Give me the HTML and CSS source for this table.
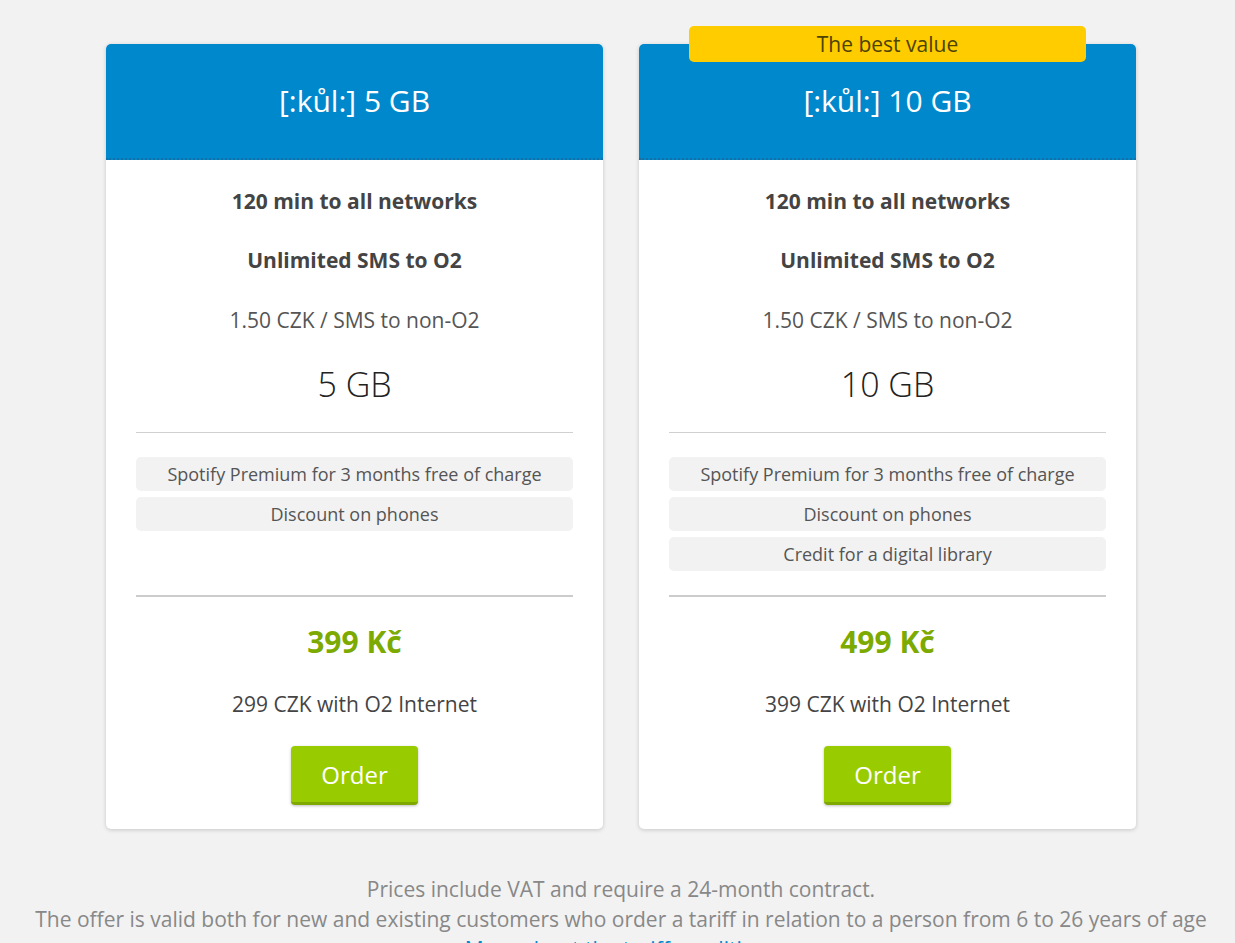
FILE: index.html
```html
<!DOCTYPE html>
<html lang="en">
<head>
<meta charset="utf-8">
<title>[:kůl:] tariffs</title>
<link rel="stylesheet" href="styles.css">
</head>
<body>
<main class="page">
  <section class="plans">
    <article class="card">
      <header class="card-head">[:kůl:] 5 GB</header>
      <div class="card-body">
        <p class="row strong first">120 min to all networks</p>
        <p class="row strong">Unlimited SMS to O2</p>
        <p class="row">1.50 CZK / SMS to non-O2</p>
        <p class="data">5 GB</p>
        <hr class="rule">
        <ul class="perks">
          <li>Spotify Premium for 3 months free of charge</li>
          <li>Discount on phones</li>
        </ul>
        <hr class="rule thick">
        <p class="price">399 Kč</p>
        <p class="row note">299 CZK with O2 Internet</p>
        <div class="cta"><button class="order">Order</button></div>
      </div>
    </article>
    <article class="card">
      <div class="badge">The best value</div>
      <header class="card-head">[:kůl:] 10 GB</header>
      <div class="card-body">
        <p class="row strong first">120 min to all networks</p>
        <p class="row strong">Unlimited SMS to O2</p>
        <p class="row">1.50 CZK / SMS to non-O2</p>
        <p class="data">10 GB</p>
        <hr class="rule">
        <ul class="perks">
          <li>Spotify Premium for 3 months free of charge</li>
          <li>Discount on phones</li>
          <li>Credit for a digital library</li>
        </ul>
        <hr class="rule thick">
        <p class="price">499 Kč</p>
        <p class="row note">399 CZK with O2 Internet</p>
        <div class="cta"><button class="order">Order</button></div>
      </div>
    </article>
  </section>
  <footer class="foot">
    <p>Prices include VAT and require a 24-month contract.</p>
    <p>The offer is valid both for new and existing customers who order a tariff in relation to a person from 6 to 26 years of age</p>
    <p><a class="more" href="#">More about the tariff conditions</a></p>
  </footer>
</main>
</body>
</html>
```
FILE: styles.css
```css
html, body {
  margin: 0;
  padding: 0;
  background: #f2f2f2;
  overflow: hidden;
}
body {
  font-family: "Open Sans", "Liberation Sans", sans-serif;
  color: #444;
}
.page {
  padding-top: 44px;
}
.plans {
  display: flex;
  gap: 36px;
  padding: 0 99px 0 106px;
}
.card {
  flex: 1;
  position: relative;
  background: #fff;
  border-radius: 5px;
  box-shadow: 0 1px 4px rgba(0, 0, 0, 0.18);
}
.badge {
  position: absolute;
  top: -18px;
  left: 50px;
  right: 50px;
  height: 36px;
  line-height: 36px;
  background: #ffcc00;
  border-radius: 5px;
  text-align: center;
  font-size: 21px;
  color: #4d4300;
}
.card-head {
  height: 114px;
  line-height: 114px;
  background: #0088cc;
  color: #fff;
  text-align: center;
  font-size: 30px;
  border-radius: 5px 5px 0 0;
  border-bottom: 2px dotted #1570a6;
}
.card-body {
  padding: 11px 30px 24px;
  text-align: center;
}
.row {
  margin: 0;
  height: 60px;
  line-height: 60px;
  font-size: 21px;
  color: #555;
}
.row.first {
  height: 59px;
}
.row.strong {
  font-weight: 700;
  color: #444;
}
.data {
  margin: 0;
  height: 68px;
  line-height: 68px;
  font-size: 34px;
  font-weight: 300;
  color: #222;
}
.rule {
  margin: 14px 0 0;
  border: 0;
  border-top: 1px solid #d0d0d0;
}
.rule.thick {
  margin: 0;
  border-top: 2px solid #cccccc;
}
.perks {
  list-style: none;
  margin: 0;
  padding: 24px 0;
  display: flex;
  flex-direction: column;
  gap: 6px;
  min-height: 114px;
}
.perks li {
  height: 34px;
  line-height: 34px;
  background: #f2f2f2;
  border-radius: 5px;
  font-size: 18px;
  color: #555;
}
.price {
  margin: 0;
  height: 90px;
  line-height: 90px;
  font-size: 30px;
  font-weight: 700;
  color: #7daa00;
}
.row.note {
  height: 34px;
  line-height: 34px;
  color: #444;
}
.cta {
  margin-top: 25px;
}
.order {
  width: 127px;
  height: 59px;
  border: 0;
  border-bottom: 3px solid #7fa800;
  border-radius: 4px;
  background: #99cc00;
  color: #fff;
  font-family: inherit;
  font-size: 24px;
  box-shadow: 0 1px 3px rgba(0, 0, 0, 0.25);
  cursor: pointer;
}
.foot {
  margin-top: 45px;
  padding-left: 7px;
  text-align: center;
  font-size: 21px;
  line-height: 30px;
  color: #888;
}
.foot p {
  margin: 0;
}
.more {
  color: #0088cc;
  text-decoration: none;
}
```
